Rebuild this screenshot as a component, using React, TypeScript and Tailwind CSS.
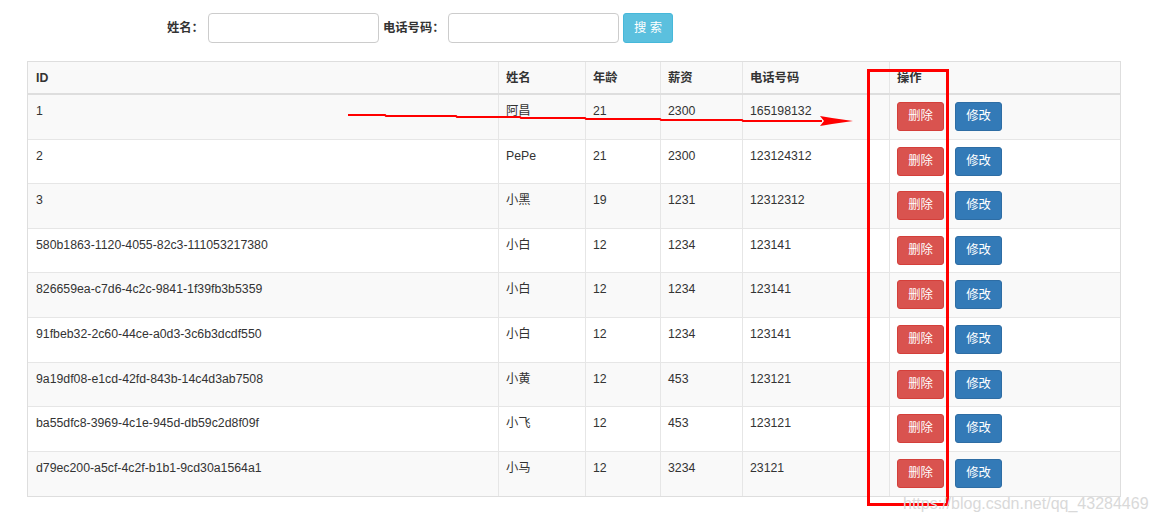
import React from 'react';

const rows = [
    ['1', '阿昌', '21', '2300', '165198132'],
    ['2', 'PePe', '21', '2300', '123124312'],
    ['3', '小黑', '19', '1231', '12312312'],
    ['580b1863-1120-4055-82c3-111053217380', '小白', '12', '1234', '123141'],
    ['826659ea-c7d6-4c2c-9841-1f39fb3b5359', '小白', '12', '1234', '123141'],
    ['91fbeb32-2c60-44ce-a0d3-3c6b3dcdf550', '小白', '12', '1234', '123141'],
    ['9a19df08-e1cd-42fd-843b-14c4d3ab7508', '小黄', '12', '453', '123121'],
    ['ba55dfc8-3969-4c1e-945d-db59c2d8f09f', '小飞', '12', '453', '123121'],
    ['d79ec200-a5cf-4c2f-b1b1-9cd30a1564a1', '小马', '12', '3234', '23121'],
];

const cols = 'grid grid-cols-[470px_87px_75px_82px_147px_1fr]';
const cell = 'border-l border-[#e6e6e6] first:border-l-0 px-[7px] first:px-[8px] pt-[7px] leading-[18px]';

function App() {
    return (
        <div className="relative w-[1156px] h-[523px] bg-white text-[#333] text-[12.3px] font-['Liberation_Sans','Noto_Sans_CJK_SC',sans-serif] overflow-hidden">
            {/* search form */}
            <div className="flex items-center pl-[167px] pt-[13px]">
                <label className="font-bold w-[41px]">姓名：</label>
                <input className="w-[171px] h-[30px] border border-[#ccc] rounded-[4px] outline-none" />
                <label className="font-bold ml-[4px] w-[65px]">电话号码：</label>
                <input className="w-[171px] h-[30px] border border-[#ccc] rounded-[4px] outline-none" />
                <button className="ml-[4px] w-[50px] h-[30px] bg-[#5bc0de] border border-[#46b8da] rounded-[3px] text-white">
                    搜 索
                </button>
            </div>

            {/* table */}
            <div className="ml-[27px] mt-[18px] w-[1094px] border border-[#dedede]">
                <div className={`${cols} h-[33px] bg-[#f9f9f9] border-b-2 border-[#dedede] font-bold`}>
                    {['ID', '姓名', '年龄', '薪资', '电话号码', '操作'].map((h) => (
                        <div key={h} className={cell}>
                            {h}
                        </div>
                    ))}
                </div>
                {rows.map((r, i) => (
                    <div
                        key={r[0]}
                        className={`${cols} h-[44.6px] border-[#e6e6e6] ${i < rows.length - 1 ? 'border-b' : ''} ${
                            i % 2 === 0 ? 'bg-[#f9f9f9]' : 'bg-white'
                        }`}
                    >
                        {r.map((v, j) => (
                            <div key={j} className={cell}>
                                {v}
                            </div>
                        ))}
                        <div className="border-l border-[#e6e6e6] pl-[7px] pt-[7px] flex items-start gap-[11px]">
                            <button className="w-[47px] h-[29px] bg-[#d9534f] border border-[#d43f3a] rounded-[3px] text-white">
                                删除
                            </button>
                            <button className="w-[47px] h-[29px] bg-[#337ab7] border border-[#2e6da4] rounded-[3px] text-white">
                                修改
                            </button>
                        </div>
                    </div>
                ))}
            </div>

            {/* red annotation: arrow */}
            <svg className="absolute left-0 top-0 pointer-events-none" width="1156" height="523">
                <polyline
                    points="348,115 385,115 386,116 456,116 457,117 520,117 521,118 585,118 586,119 660,119 661,120 742,120 743,121 822,121"
                    fill="none"
                    stroke="#ff0000"
                    strokeWidth="2"
                />
                <polygon points="820,116 832,118 853,121 832,124 820,126 824,121" fill="#ff0000" />
            </svg>

            {/* red annotation: box */}
            <div className="absolute left-[867px] top-[69px] w-[82px] h-[437px] border-[3px] border-[#ff0000] pointer-events-none" />

            {/* watermark */}
            <div className="absolute left-[903px] top-[494px] text-[16px] leading-[20px] text-[#d9d9d9] font-['Liberation_Sans',sans-serif]">
                https://blog.csdn.net/qq_43284469
            </div>
        </div>
    );
}

export default App;
